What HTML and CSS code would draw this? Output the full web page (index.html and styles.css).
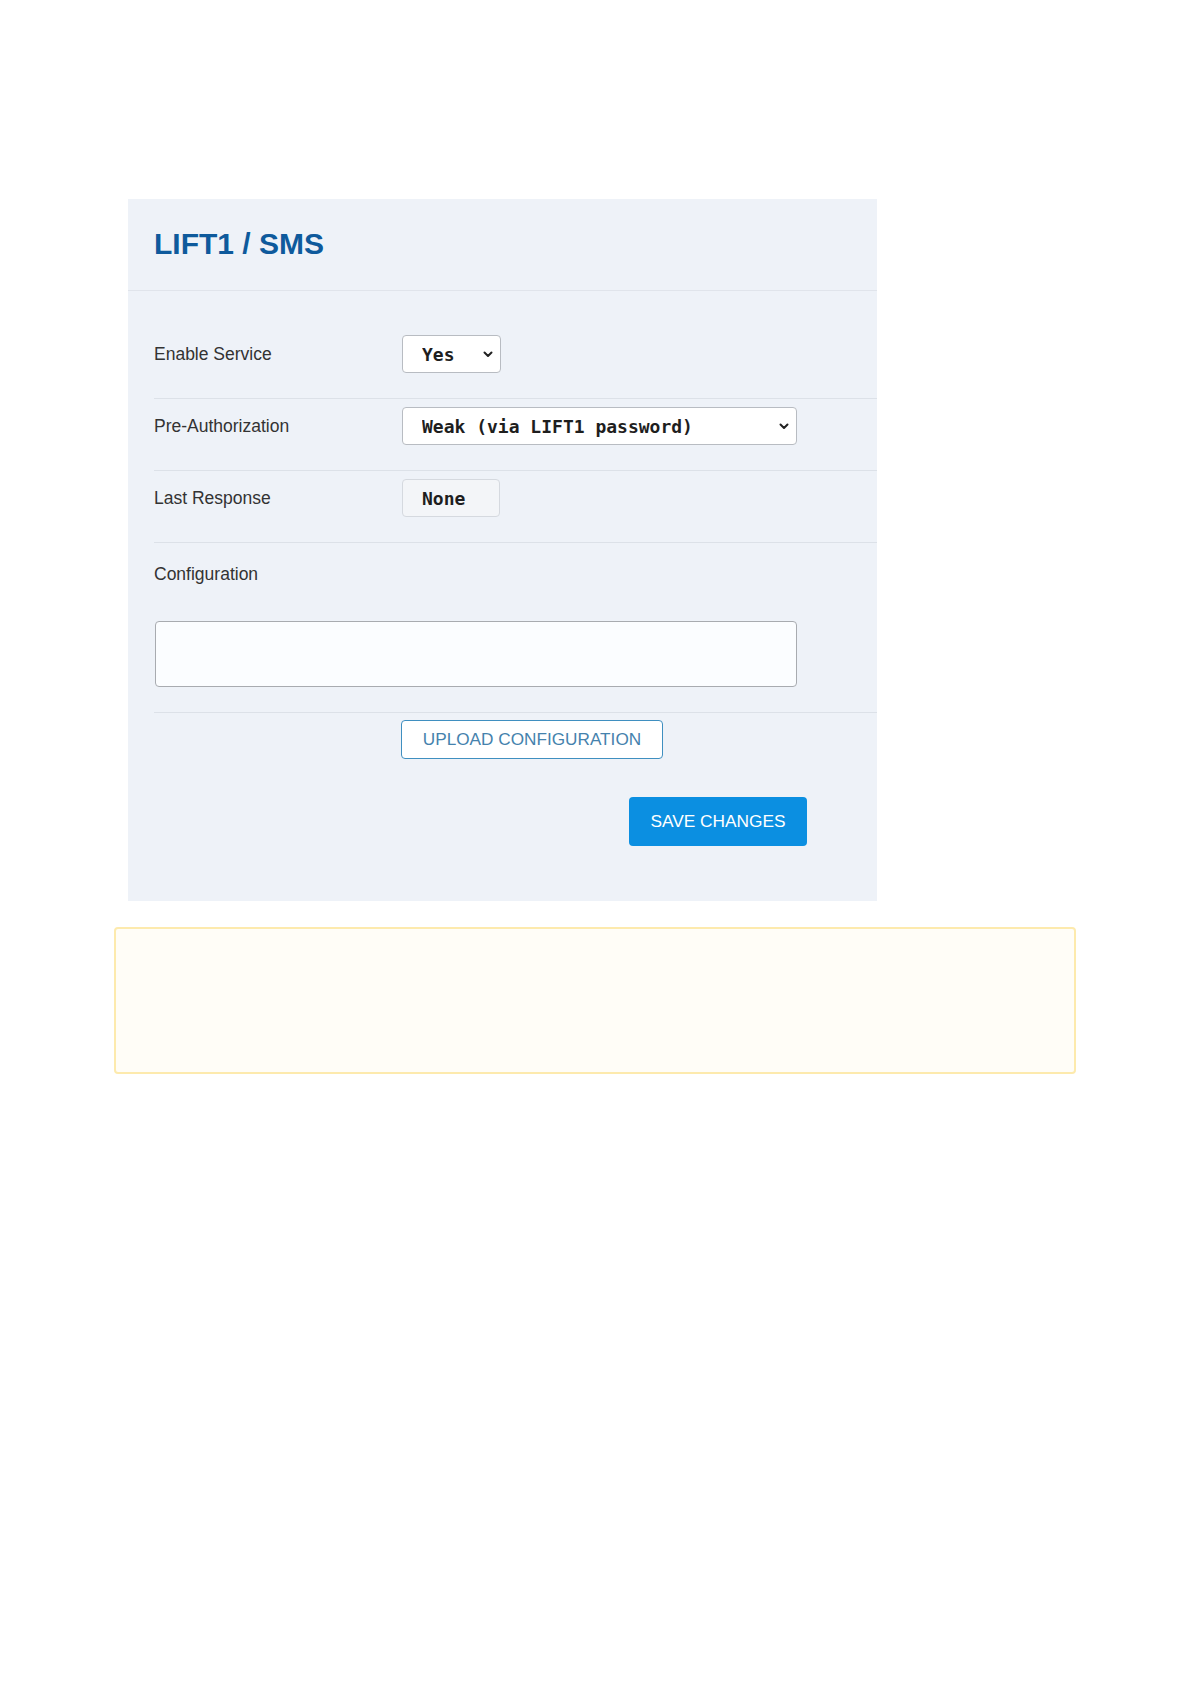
FILE: index.html
```html
<!DOCTYPE html>
<html lang="en">
  <head>
    <meta charset="UTF-8" />
    <meta name="viewport" content="width=device-width, initial-scale=1.0" />
    <title>LIFT1 / SMS</title>
    <link rel="stylesheet" href="styles.css">
  </head>
  <body>
    <div class="panel">
      <div class="panel-head">
        <h2 class="panel-title">LIFT1 / SMS</h2>
      </div>
      <div class="panel-body">
        <div class="row">
          <label class="row-label" for="enable">Enable Service</label>
          <div class="select-wrap select-short">
            <select class="select" id="enable">
              <option>Yes</option>
              <option>No</option>
            </select>
            <svg class="chevron" width="10" height="7" viewBox="0 0 10 7"><path d="M1.5 1.5 L5 5 L8.5 1.5" fill="none" stroke="#222" stroke-width="2" stroke-linecap="round" stroke-linejoin="round"/></svg>
          </div>
        </div>
        <div class="row">
          <label class="row-label" for="preauth">Pre-Authorization</label>
          <div class="select-wrap select-long">
            <select class="select" id="preauth">
              <option>Weak (via LIFT1 password)</option>
              <option>None</option>
            </select>
            <svg class="chevron" width="10" height="7" viewBox="0 0 10 7"><path d="M1.5 1.5 L5 5 L8.5 1.5" fill="none" stroke="#222" stroke-width="2" stroke-linecap="round" stroke-linejoin="round"/></svg>
          </div>
        </div>
        <div class="row">
          <span class="row-label">Last Response</span>
          <div class="readonly-box">None</div>
        </div>
        <div class="row row-config">
          <label class="row-label" for="config">Configuration</label>
          <textarea class="config-text" id="config"></textarea>
        </div>
        <div class="upload-line">
          <button class="btn-upload">UPLOAD CONFIGURATION</button>
        </div>
        <div class="save-line">
          <button class="btn-save">SAVE CHANGES</button>
        </div>
      </div>
    </div>

    <div class="notice"></div>
  </body>
</html>
```

FILE: styles.css
```css
body {
  margin: 0;
  background-color: #ffffff;
  font-family: "Liberation Sans", Arial, sans-serif;
  color: #333;
}

.panel {
  width: 749px;
  margin: 199px 0 0 128px;
  background-color: #eef2f8;
}

.panel-head {
  padding: 28px 26px 29px;
  border-bottom: 1px solid #e0e4eb;
}

.panel-title {
  margin: 0;
  font-size: 30px;
  line-height: 34px;
  font-weight: bold;
  color: #0e5a9c;
}

.panel-body {
  padding: 36px 0 55px 26px;
}

.row {
  display: flex;
  align-items: center;
  padding: 8px 0 25px;
  border-bottom: 1px solid #dce1e8;
}

.row-label {
  width: 248px;
  font-size: 17.5px;
  line-height: 20px;
  color: #333;
}

.select-wrap {
  position: relative;
  height: 38px;
}

.select-short {
  width: 99px;
}

.select-long {
  width: 395px;
}

.select {
  -webkit-appearance: none;
  appearance: none;
  box-sizing: border-box;
  width: 100%;
  height: 38px;
  padding: 0 0 0 19px;
  border: 1px solid #b8bcc2;
  border-radius: 4px;
  background-color: #fff;
  font-family: "DejaVu Sans Mono", "Liberation Mono", monospace;
  font-size: 18px;
  font-weight: bold;
  color: #1e1e1e;
}

.chevron {
  position: absolute;
  right: 8px;
  top: 16px;
}

.readonly-box {
  box-sizing: border-box;
  width: 98px;
  height: 38px;
  padding-left: 19px;
  display: flex;
  align-items: center;
  border: 1px solid #d5d9df;
  border-radius: 4px;
  background-color: #f3f5f8;
  font-family: "DejaVu Sans Mono", "Liberation Mono", monospace;
  font-size: 18px;
  font-weight: bold;
  color: #1e1e1e;
}

.row-config {
  display: block;
  padding: 21px 0 25px;
}

.row-config .row-label {
  display: block;
}

.config-text {
  display: block;
  box-sizing: border-box;
  width: 642px;
  height: 66px;
  margin: 37px 0 0 1px;
  border: 1px solid #a8abb0;
  border-radius: 4px;
  background-color: #fbfdff;
  resize: none;
}

.upload-line {
  padding: 7px 0 0 247px;
}

.btn-upload {
  box-sizing: border-box;
  width: 262px;
  height: 39px;
  border: 1px solid #3f8fc0;
  border-radius: 4px;
  background-color: #fff;
  font-family: "Liberation Sans", Arial, sans-serif;
  font-size: 17.2px;
  color: #4582ad;
  cursor: pointer;
}

.save-line {
  display: flex;
  justify-content: flex-end;
  padding: 38px 70px 0 0;
}

.btn-save {
  width: 178px;
  height: 49px;
  border: none;
  border-radius: 4px;
  background-color: #0b8fe1;
  font-family: "Liberation Sans", Arial, sans-serif;
  font-size: 17.3px;
  color: #fff;
  cursor: pointer;
}

.notice {
  box-sizing: border-box;
  width: 962px;
  height: 147px;
  margin: 26px 0 0 114px;
  border: 2px solid #fdeaad;
  border-radius: 4px;
  background-color: #fffdf7;
}
```
